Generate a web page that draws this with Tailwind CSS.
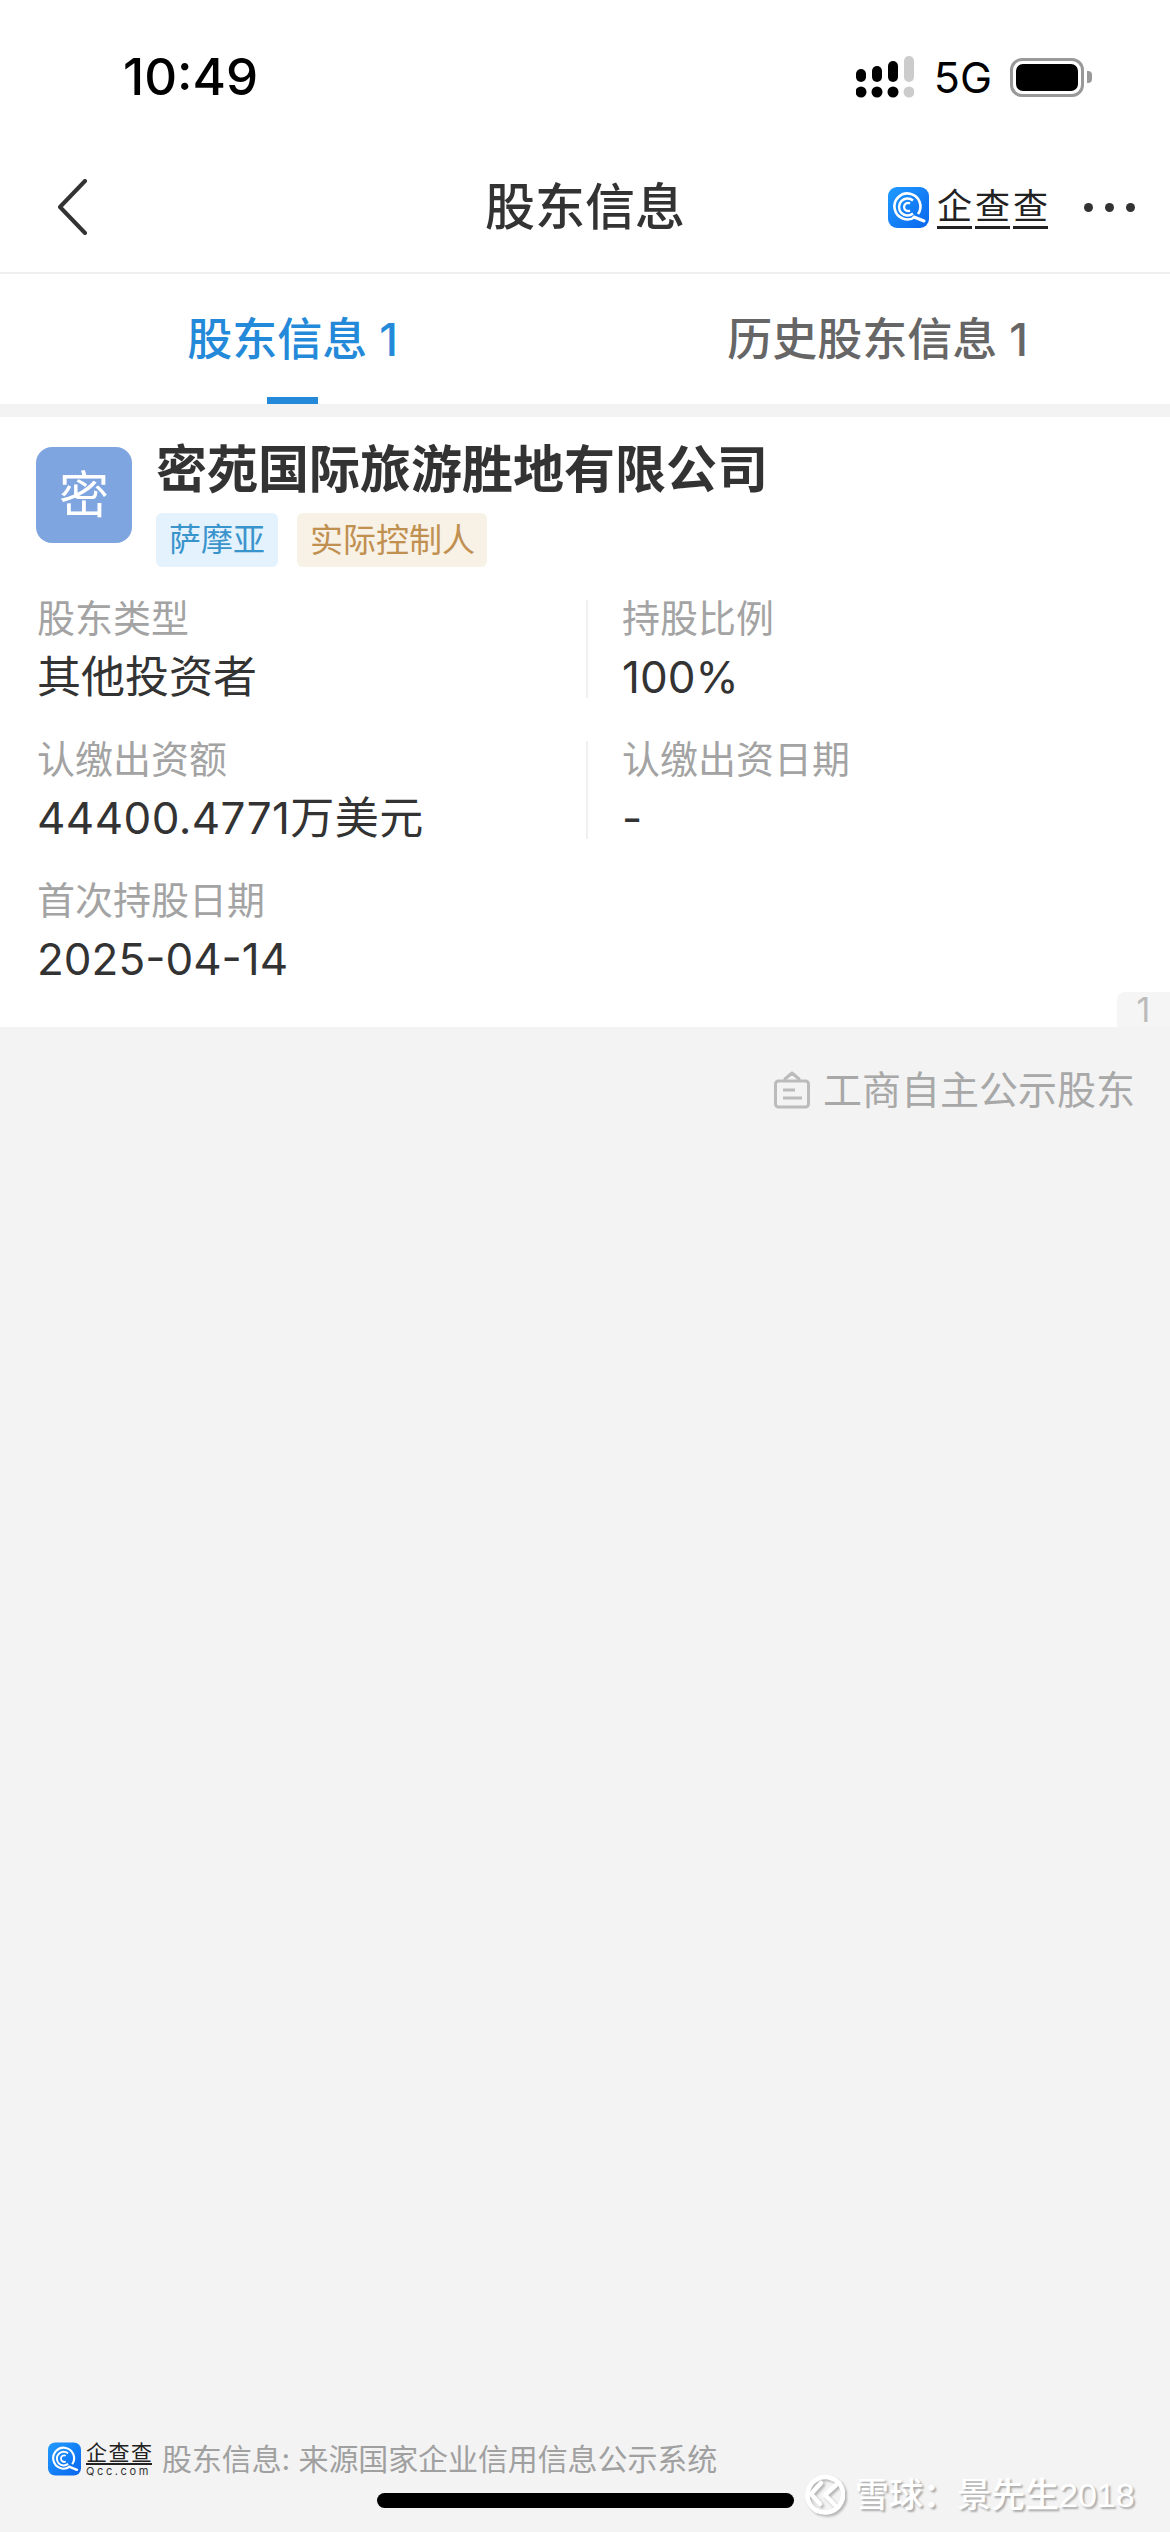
<!DOCTYPE html>
<html lang="zh-CN">
<head>
    <meta charset="UTF-8">
    <title>股东信息</title>
    <script src="https://cdn.jsdelivr.net/npm/@tailwindcss/browser@4"></script>
</head>
<body class="bg-[#f3f3f3] font-['Inter','Noto_Sans_CJK_SC',sans-serif]">
<div class="relative w-[1170px] h-[2532px] overflow-hidden flex flex-col">

    <!-- 状态栏 -->
    <div class="h-[140px] bg-white flex justify-between pt-[52px] pl-[123px] pr-[78px]">
        <span class="h-[50px] leading-[50px] text-[51px] font-medium text-black">10:49</span>
        <div class="h-[50px] flex items-center">
            <svg width="58" height="42" viewBox="0 0 58 42">
                <rect x="0" y="13" width="10" height="13" rx="5" fill="#000"/>
                <rect x="16" y="10" width="10" height="16" rx="5" fill="#000"/>
                <rect x="32" y="5" width="10" height="21" rx="5" fill="#000"/>
                <rect x="48" y="0" width="10" height="26" rx="5" fill="#ccc"/>
                <circle cx="5" cy="36" r="5.5" fill="#000"/>
                <circle cx="21" cy="36" r="5.5" fill="#000"/>
                <circle cx="37" cy="36" r="5.5" fill="#000"/>
                <circle cx="53" cy="36" r="5.5" fill="#ccc"/>
            </svg>
            <span class="ml-[20px] text-[43px] leading-[50px] text-black">5G</span>
            <div class="ml-[18px] w-[74px] h-[39px] rounded-[12px] border-[3px] border-[#999] p-[3px]">
                <div class="w-full h-full rounded-[7px] bg-black"></div>
            </div>
            <div class="ml-[3px] w-[5px] h-[12px] rounded-r-[4px] bg-[#999]"></div>
        </div>
    </div>

    <!-- 导航栏 -->
    <div class="h-[134px] pt-[2px] bg-white border-b-2 border-[#f0f0f0] grid grid-cols-[1fr_auto_1fr] items-center pl-[35px] pr-[35px]">
        <svg class="ml-[21px]" width="32" height="56" viewBox="0 0 32 56" fill="none" stroke="#333" stroke-width="4" stroke-linecap="round" stroke-linejoin="round">
            <path d="M29 2 L4 28 L29 54"/>
        </svg>
        <div class="text-[50px] leading-[60px] font-medium text-[#333]">股东信息</div>
        <div class="flex items-center justify-end">
            <svg width="41" height="41" viewBox="0 0 41 41" fill="none">
                <defs>
                    <linearGradient id="qcc1" x1="0" y1="0" x2="1" y2="1">
                        <stop offset="0" stop-color="#1f9bff"/>
                        <stop offset="1" stop-color="#0a66ee"/>
                    </linearGradient>
                </defs>
                <rect width="41" height="41" rx="9" fill="url(#qcc1)"/>
                <path d="M27 30 A13 13 0 1 1 30 27" stroke="#fff" stroke-width="2.6"/>
                <path d="M25 13.5 A8.5 8.5 0 1 0 25 26.5" stroke="#fff" stroke-width="2.4"/>
                <path d="M22 16.5 A4 4 0 1 0 22 23.5" stroke="#fff" stroke-width="2.2"/>
                <path d="M26 30 L36 34" stroke="#fff" stroke-width="3" stroke-linecap="round"/>
            </svg>
            <div class="ml-[8px] flex gap-[3px] text-[35px] leading-[40px] text-[#222]">
                <span class="h-[43px] border-b-[3px] border-[#222]">企</span>
                <span class="h-[43px] border-b-[3px] border-[#222]">查</span>
                <span class="h-[43px] border-b-[3px] border-[#222]">查</span>
            </div>
            <div class="ml-[36px] flex gap-[12px]">
                <span class="w-[9px] h-[9px] rounded-full bg-[#333]"></span>
                <span class="w-[9px] h-[9px] rounded-full bg-[#333]"></span>
                <span class="w-[9px] h-[9px] rounded-full bg-[#333]"></span>
            </div>
        </div>
    </div>

    <!-- 标签页 -->
    <div class="h-[130px] bg-white grid grid-cols-2 text-center">
        <div class="pt-[43px]">
            <div class="h-[46px] leading-[46px] text-[45px] font-medium text-[#2389d8]">股东信息 1</div>
            <div class="mt-[34px] mx-auto w-[51px] h-[7px] bg-[#2389d8]"></div>
        </div>
        <div class="pt-[43px]">
            <div class="h-[46px] leading-[46px] text-[45px] font-medium text-[#666]">历史股东信息 1</div>
        </div>
    </div>
    <div class="h-[13px] bg-[#f3f3f3]"></div>

    <!-- 股东卡片 -->
    <div class="relative bg-white pt-[30px] pb-[47px] pl-[37px]">
        <div class="flex">
            <div class="w-[96px] h-[96px] -ml-px rounded-[16px] bg-[#7fa5e0] flex items-center justify-center text-[50px] text-white">密</div>
            <div class="ml-[24px]">
                <div class="h-[46px] leading-[46px] text-[51px] font-bold text-[#333]">密苑国际旅游胜地有限公司</div>
                <div class="mt-[20px] flex gap-[19px]">
                    <span class="h-[54px] leading-[54px] px-[13px] rounded-[6px] bg-[#e3f2fd] text-[32px] text-[#3a94cc]">萨摩亚</span>
                    <span class="h-[54px] leading-[54px] pl-[13px] pr-[12px] rounded-[6px] bg-[#f8f1e6] text-[33px] text-[#c09050]">实际控制人</span>
                </div>
            </div>
        </div>

        <div class="mt-[33px] grid grid-cols-[549px_1fr] gap-y-[43px]">
            <div class="h-[98px]">
                <div class="h-[36px] leading-[36px] text-[38px] text-[#a3a3a3]">股东类型</div>
                <div class="mt-[19px] h-[44px] leading-[44px] text-[44px] text-[#333]">其他投资者</div>
            </div>
            <div class="h-[98px] border-l-2 border-[#f0f0f0] pl-[34px]">
                <div class="h-[36px] leading-[36px] text-[38px] text-[#a3a3a3]">持股比例</div>
                <div class="mt-[19px] h-[44px] leading-[44px] text-[44px] text-[#333]">100%</div>
            </div>
            <div class="h-[98px]">
                <div class="h-[36px] leading-[36px] text-[38px] text-[#a3a3a3]">认缴出资额</div>
                <div class="mt-[19px] h-[44px] leading-[44px] text-[44px] tracking-[0.4px] text-[#333]">44400.4771万美元</div>
            </div>
            <div class="h-[98px] border-l-2 border-[#f0f0f0] pl-[34px]">
                <div class="h-[36px] leading-[36px] text-[38px] text-[#a3a3a3]">认缴出资日期</div>
                <div class="mt-[19px] h-[44px] leading-[44px] text-[44px] text-[#333]">-</div>
            </div>
            <div class="h-[98px]">
                <div class="h-[36px] leading-[36px] text-[38px] text-[#a3a3a3]">首次持股日期</div>
                <div class="mt-[19px] h-[44px] leading-[44px] text-[44px] text-[#333]">2025-04-14</div>
            </div>
        </div>

        <div class="absolute right-0 bottom-0 w-[53px] h-[35px] rounded-tl-[8px] bg-[#f5f5f5] text-center text-[34px] leading-[35px] text-[#bbb]">1</div>
    </div>

    <div class="h-[126px] flex items-center justify-end gap-[13px] pr-[35px]">
        <svg width="36" height="38" viewBox="0 0 36 38" fill="none" stroke="#bbb" stroke-width="3" stroke-linejoin="round">
            <rect x="1.5" y="10" width="33" height="26" rx="3"/>
            <path d="M11 10 V8 L18 2 L25 8 V10"/>
            <path d="M9 19 H21 M9 27 H28"/>
        </svg>
        <span class="text-[39px] leading-[44px] text-[#a8a8a8]">工商自主公示股东</span>
    </div>

    <!-- 来源 -->
    <div class="mt-auto pb-[55px] pl-[48px] flex items-center">
        <svg width="33" height="34" viewBox="0 0 41 41" fill="none">
            <defs>
                <linearGradient id="qcc2" x1="0" y1="0" x2="1" y2="1">
                    <stop offset="0" stop-color="#1f9bff"/>
                    <stop offset="1" stop-color="#0a66ee"/>
                </linearGradient>
            </defs>
            <rect width="41" height="41" rx="9" fill="url(#qcc2)"/>
            <path d="M27 30 A13 13 0 1 1 30 27" stroke="#fff" stroke-width="2.6"/>
            <path d="M25 13.5 A8.5 8.5 0 1 0 25 26.5" stroke="#fff" stroke-width="2.4"/>
            <path d="M22 16.5 A4 4 0 1 0 22 23.5" stroke="#fff" stroke-width="2.2"/>
            <path d="M26 30 L36 34" stroke="#fff" stroke-width="3" stroke-linecap="round"/>
        </svg>
        <div class="ml-[5px] w-[66px] flex flex-col">
            <div class="flex justify-between h-[23px] leading-[21px] text-[21px] text-[#222] border-b-2 border-[#222]">
                <span>企</span><span>查</span><span>查</span>
            </div>
            <div class="mt-[1px] text-[11px] leading-[11px] tracking-[2.6px] text-[#333] whitespace-nowrap">Qcc.com</div>
        </div>
        <span class="ml-[10px] text-[30px] leading-[36px] tracking-[-0.1px] text-[#a0a0a0]">股东信息: 来源国家企业信用信息公示系统</span>
    </div>

    <!-- 浮层: 水印和 home 条 -->
    <div class="absolute left-[903px] top-[144px] text-[34px] leading-[30px] tracking-[16px] text-black/[0.02]">ee6mqv1</div>
    <div class="absolute left-[11px] top-[244px] text-[34px] leading-[28px] tracking-[16px] text-black/[0.025]">ee6mqv1</div>
    <div class="absolute left-[377px] top-[2493px] w-[417px] h-[15px] rounded-full bg-black"></div>
    <svg class="absolute left-[803px] top-[2473px]" width="42" height="42" viewBox="0 0 42 42" fill="none" stroke="#fff" stroke-width="4.5" stroke-linecap="round" stroke-linejoin="round" style="filter: drop-shadow(2px 2px 1px rgba(0,0,0,0.25))">
        <path d="M28 5 A18 18 0 0 0 14 38"/>
        <path d="M13 37 A18 18 0 0 0 36 10"/>
        <path d="M28 5 A18 18 0 0 1 36 10"/>
        <path d="M18 10 L8 21 L17 31"/>
        <path d="M33 12 L22 22 L32 32"/>
    </svg>
    <div class="absolute left-[855px] top-[2474px] text-[34px] leading-[42px] font-medium text-white font-['Liberation_Sans','Noto_Sans_CJK_SC',sans-serif] [text-shadow:2px_2px_2px_rgba(0,0,0,0.3)]">雪球：景先生2018</div>
</div>
</body>
</html>
